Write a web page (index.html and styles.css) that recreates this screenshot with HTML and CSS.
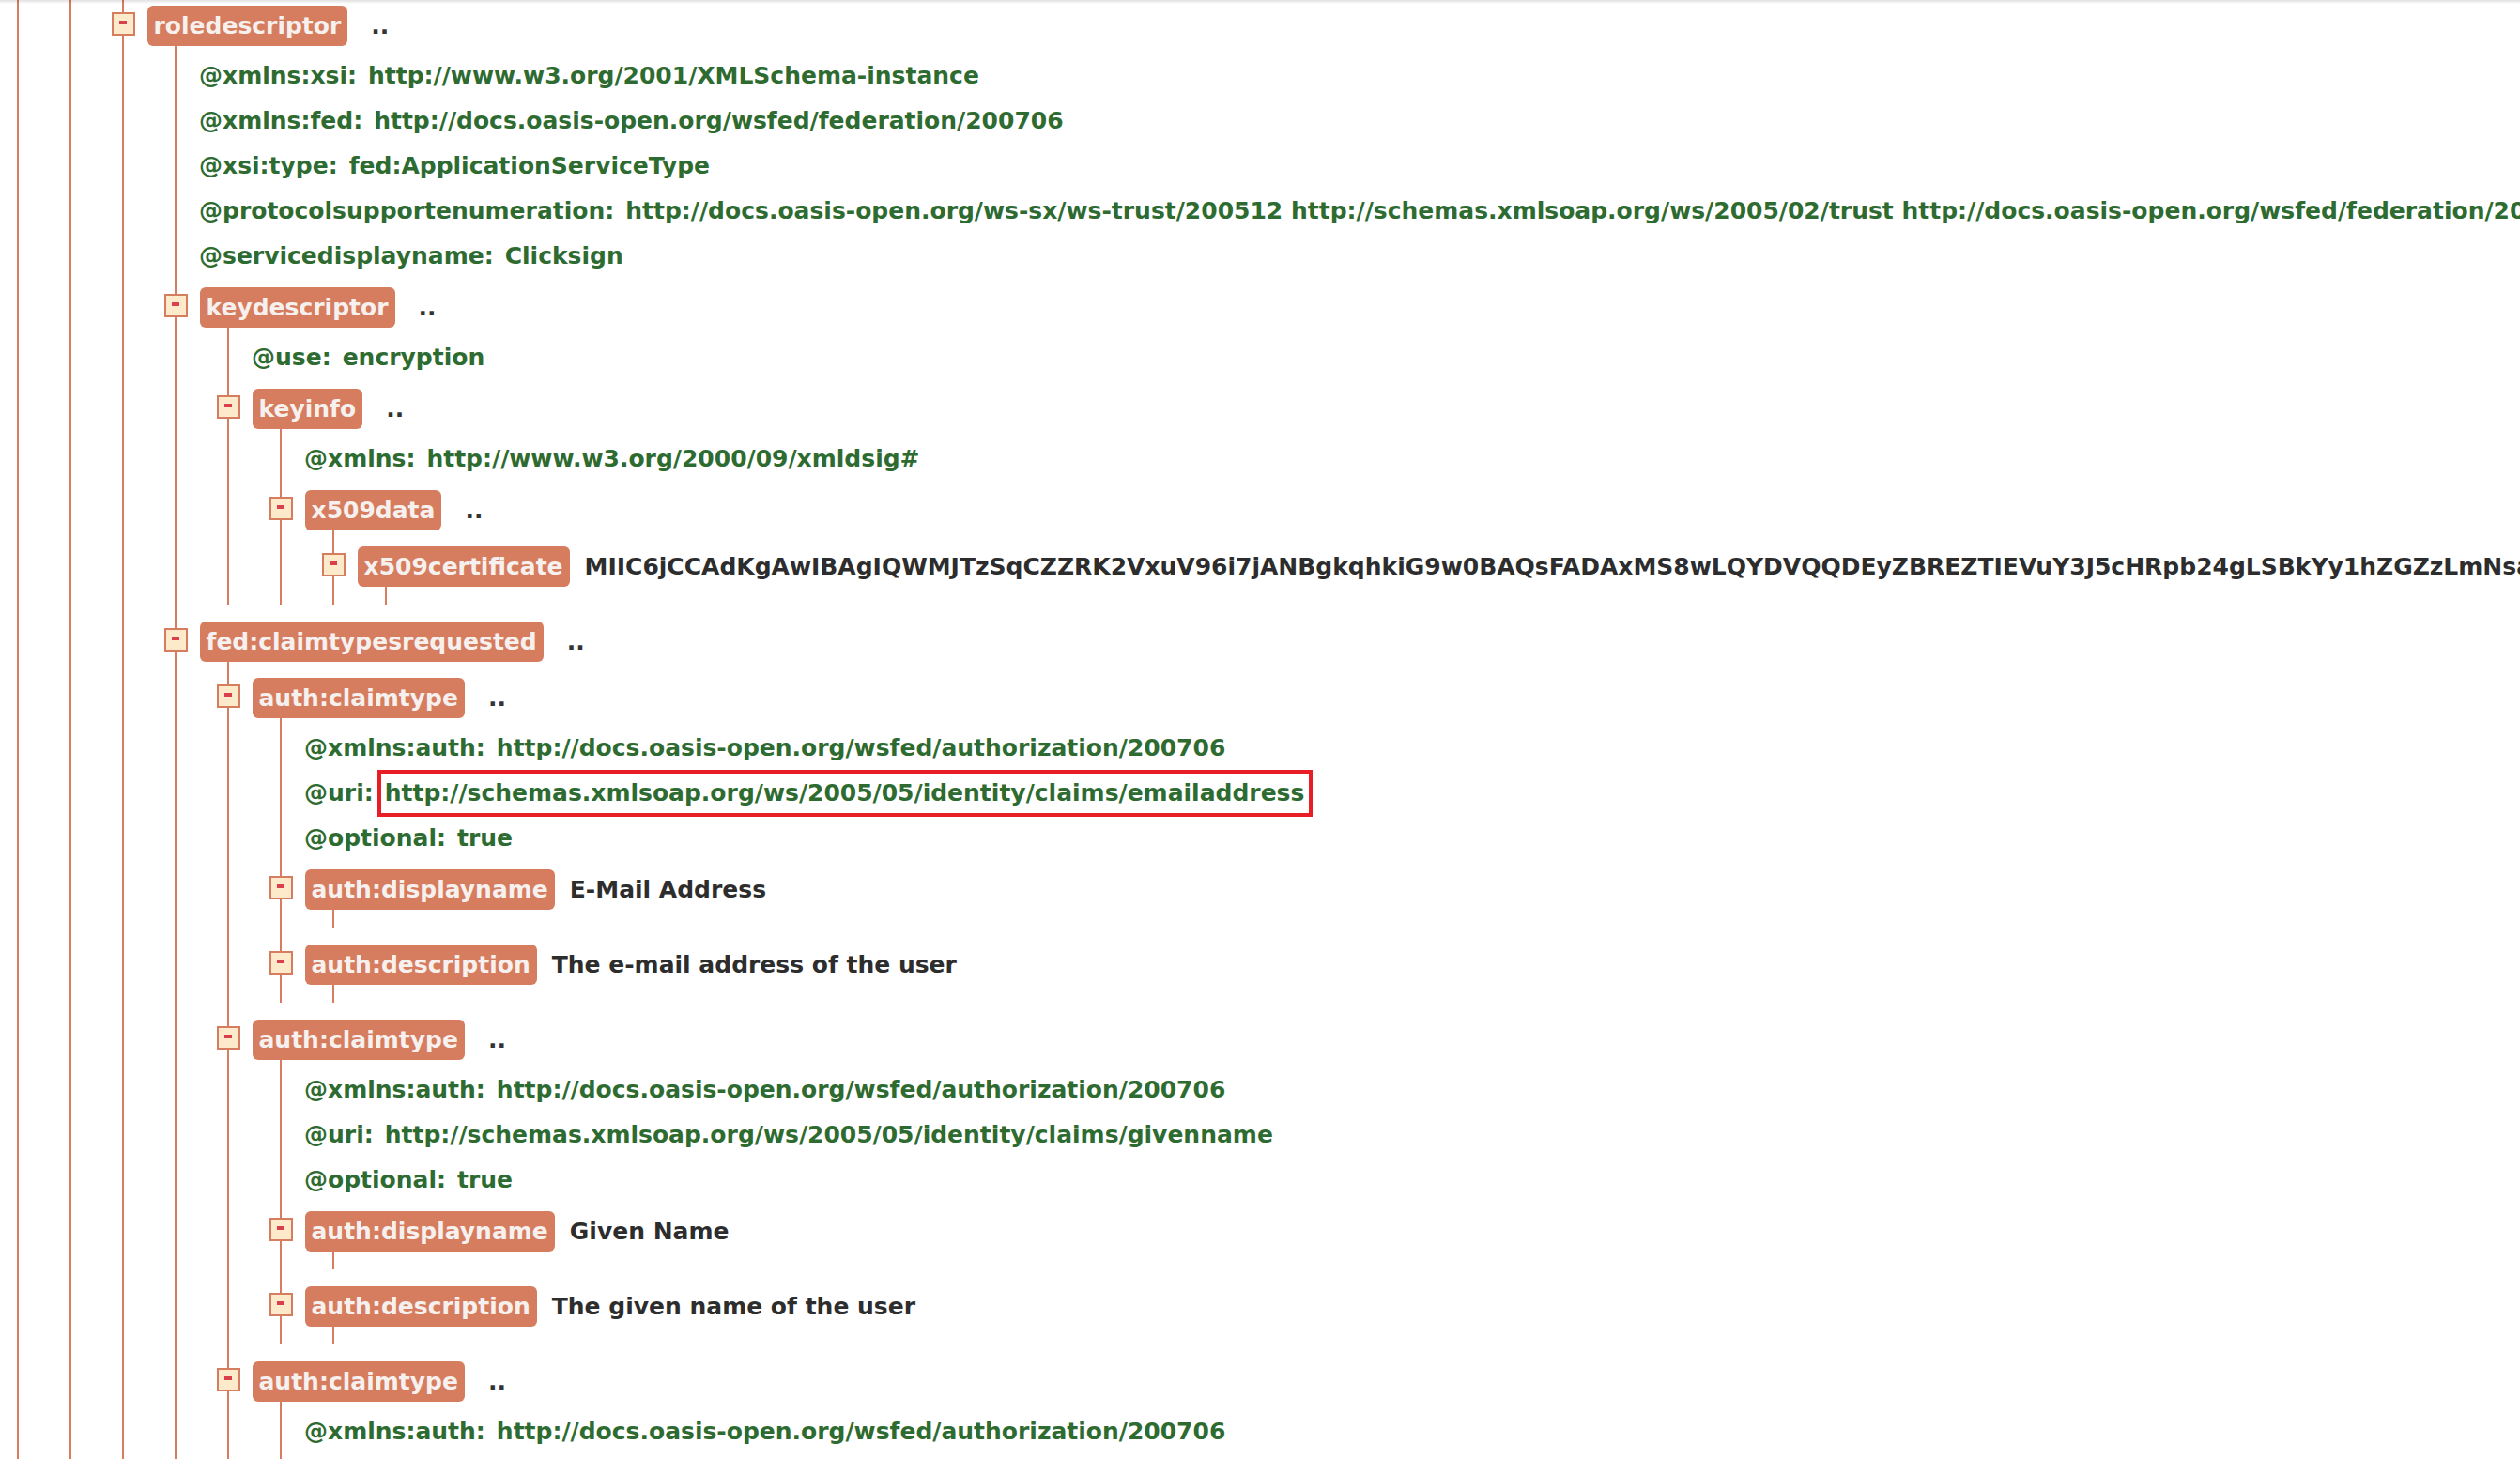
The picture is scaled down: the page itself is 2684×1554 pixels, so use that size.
FILE: index.html
```html
<!DOCTYPE html>
<html lang="en">
<head>
    <meta charset="UTF-8">
    <title>XML tree</title>
    <link rel="stylesheet" href="styles.css">
</head>
<body>
<div class="page">
    <div class="shade"></div>
    <div class="trunk">
    <div class="node"><div class="node-body stem">
    <div class="node"><div class="node-body stem">

        <!-- roledescriptor -->
        <div class="node first">
            <div class="node-head"><span class="toggle"></span><span class="tag">roledescriptor</span><span class="dots">..</span></div>
            <div class="node-body">
                <div class="attr">@xmlns:xsi:<span class="attr-value">http://www.w3.org/2001/XMLSchema-instance</span></div>
                <div class="attr">@xmlns:fed:<span class="attr-value">http://docs.oasis-open.org/wsfed/federation/200706</span></div>
                <div class="attr">@xsi:type:<span class="attr-value">fed:ApplicationServiceType</span></div>
                <div class="attr">@protocolsupportenumeration:<span class="attr-value">http://docs.oasis-open.org/ws-sx/ws-trust/200512 http://schemas.xmlsoap.org/ws/2005/02/trust http://docs.oasis-open.org/wsfed/federation/200706</span></div>
                <div class="attr">@servicedisplayname:<span class="attr-value">Clicksign</span></div>

                <div class="node">
                    <div class="node-head"><span class="toggle"></span><span class="tag">keydescriptor</span><span class="dots">..</span></div>
                    <div class="node-body">
                        <div class="attr">@use:<span class="attr-value">encryption</span></div>
                        <div class="node">
                            <div class="node-head"><span class="toggle"></span><span class="tag">keyinfo</span><span class="dots">..</span></div>
                            <div class="node-body">
                                <div class="attr">@xmlns:<span class="attr-value">http://www.w3.org/2000/09/xmldsig#</span></div>
                                <div class="node">
                                    <div class="node-head"><span class="toggle"></span><span class="tag">x509data</span><span class="dots">..</span></div>
                                    <div class="node-body">
                                        <div class="node">
                                            <div class="node-head"><span class="toggle"></span><span class="tag">x509certificate</span><span class="text">MIIC6jCCAdKgAwIBAgIQWMJTzSqCZZRK2VxuV96i7jANBgkqhkiG9w0BAQsFADAxMS8wLQYDVQQDEyZBREZTIEVuY3J5cHRpb24gLSBkYy1hZGZzLmNsaWNrc2lnbi5jb20wHhcNMjIwMTEwMTQ1NjAwWhcNMjMwMTEwMTQ1NjAwWjAx</span></div>
                                            <div class="node-body empty"></div>
                                        </div>
                                    </div>
                                </div>
                            </div>
                        </div>
                    </div>
                </div>

                <div class="node">
                    <div class="node-head"><span class="toggle"></span><span class="tag">fed:claimtypesrequested</span><span class="dots">..</span></div>
                    <div class="node-body">

                        <div class="node">
                            <div class="node-head"><span class="toggle"></span><span class="tag">auth:claimtype</span><span class="dots">..</span></div>
                            <div class="node-body">
                                <div class="attr">@xmlns:auth:<span class="attr-value">http://docs.oasis-open.org/wsfed/authorization/200706</span></div>
                                <div class="attr">@uri:<span class="attr-value marked">http://schemas.xmlsoap.org/ws/2005/05/identity/claims/emailaddress</span></div>
                                <div class="attr">@optional:<span class="attr-value">true</span></div>
                                <div class="node">
                                    <div class="node-head"><span class="toggle"></span><span class="tag">auth:displayname</span><span class="text">E-Mail Address</span></div>
                                    <div class="node-body empty"></div>
                                </div>
                                <div class="node">
                                    <div class="node-head"><span class="toggle"></span><span class="tag">auth:description</span><span class="text">The e-mail address of the user</span></div>
                                    <div class="node-body empty"></div>
                                </div>
                            </div>
                        </div>

                        <div class="node">
                            <div class="node-head"><span class="toggle"></span><span class="tag">auth:claimtype</span><span class="dots">..</span></div>
                            <div class="node-body">
                                <div class="attr">@xmlns:auth:<span class="attr-value">http://docs.oasis-open.org/wsfed/authorization/200706</span></div>
                                <div class="attr">@uri:<span class="attr-value">http://schemas.xmlsoap.org/ws/2005/05/identity/claims/givenname</span></div>
                                <div class="attr">@optional:<span class="attr-value">true</span></div>
                                <div class="node">
                                    <div class="node-head"><span class="toggle"></span><span class="tag">auth:displayname</span><span class="text">Given Name</span></div>
                                    <div class="node-body empty"></div>
                                </div>
                                <div class="node">
                                    <div class="node-head"><span class="toggle"></span><span class="tag">auth:description</span><span class="text">The given name of the user</span></div>
                                    <div class="node-body empty"></div>
                                </div>
                            </div>
                        </div>

                        <div class="node">
                            <div class="node-head"><span class="toggle"></span><span class="tag">auth:claimtype</span><span class="dots">..</span></div>
                            <div class="node-body">
                                <div class="attr">@xmlns:auth:<span class="attr-value">http://docs.oasis-open.org/wsfed/authorization/200706</span></div>
                                <div class="attr">@uri:<span class="attr-value">http://schemas.xmlsoap.org/ws/2005/05/identity/claims/surname</span></div>
                                <div class="attr">@optional:<span class="attr-value">true</span></div>
                                <div class="node">
                                    <div class="node-head"><span class="toggle"></span><span class="tag">auth:displayname</span><span class="text">Surname</span></div>
                                    <div class="node-body empty"></div>
                                </div>
                            </div>
                        </div>

                    </div>
                </div>

            </div>
        </div>

    </div></div>
    </div></div>
    </div>
</div>
</body>
</html>
```

FILE: styles.css
```css
html, body {
    margin: 0;
    padding: 0;
    background-color: #ffffff;
}
body {
    font-family: "DejaVu Sans", "Liberation Sans", sans-serif;
    font-size: 25px;
    font-weight: bold;
    color: #2d2d2d;
}
.page {
    height: 100vh;
    overflow: hidden;
}
/* thin shadow under the (scrolled away) toolbar */
.shade {
    position: fixed;
    top: 0;
    left: 0;
    right: 0;
    height: 4px;
    background: linear-gradient(rgba(0, 0, 0, 0.12), rgba(0, 0, 0, 0));
    z-index: 2;
}
.trunk {
    margin-left: 18px;
    border-left: 2px solid #d77d5f;
}
.node {
    margin-left: -13.5px;
    margin-bottom: 9px;
}
.node.first {
    margin-top: -3px;
}
.node-head {
    display: flex;
    align-items: center;
    padding-top: 9px;
    white-space: nowrap;
}
.toggle {
    box-sizing: border-box;
    flex: none;
    width: 25px;
    height: 25px;
    margin-right: 13px;
    margin-bottom: 5px;
    border: 2px solid #d77d5f;
    background-color: #fdeacb;
    display: flex;
    align-items: center;
    justify-content: center;
}
.toggle::before {
    content: "";
    width: 8px;
    height: 4px;
    margin-top: -2px;
    background-color: #d9404a;
}
.tag {
    flex: none;
    height: 43px;
    line-height: 43px;
    padding: 0 7px;
    background-color: #d77d5f;
    color: #f6f0ee;
    border-radius: 6px;
}
.dots {
    margin-left: 25px;
    color: #333333;
}
.text {
    margin-left: 16px;
    color: #2d2d2d;
}
.node-body {
    margin-left: 67.5px;
    border-left: 2px solid #d77d5f;
    padding-top: 8px;
}
.node-body.stem {
    padding-top: 0;
}
.node-body.empty {
    box-sizing: border-box;
    height: 19px;
    padding-top: 0;
}
.attr {
    height: 48px;
    line-height: 48px;
    padding-left: 24px;
    color: #2e6b31;
    white-space: nowrap;
}
.attr-value {
    margin-left: 12px;
}
.attr-value.marked {
    display: inline-block;
    line-height: 42px;
    margin-left: 8px;
    padding: 0 5px 0 4px;
    outline: 4px solid #e91d25;
}
```
